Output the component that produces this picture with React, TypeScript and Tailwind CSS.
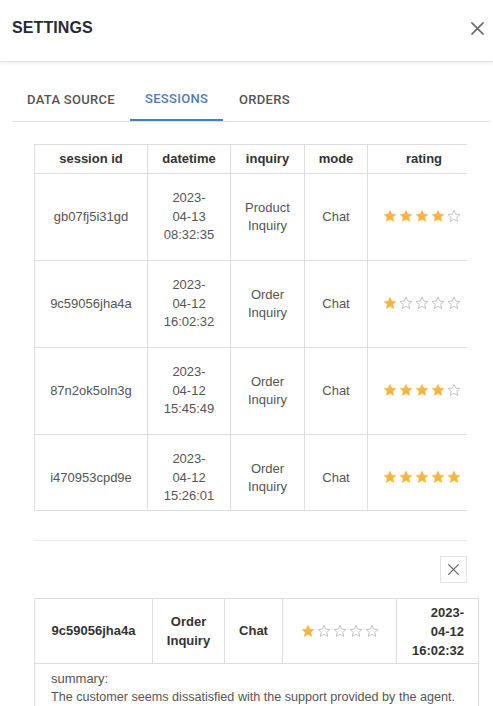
import React from "react";

const rows = [
  { id: "gb07fj5i31gd", date: ["2023-", "04-13", "08:32:35"], inq: ["Product", "Inquiry"], mode: "Chat", rating: 4 },
  { id: "9c59056jha4a", date: ["2023-", "04-12", "16:02:32"], inq: ["Order", "Inquiry"], mode: "Chat", rating: 1 },
  { id: "87n2ok5oln3g", date: ["2023-", "04-12", "15:45:49"], inq: ["Order", "Inquiry"], mode: "Chat", rating: 4 },
  { id: "i470953cpd9e", date: ["2023-", "04-12", "15:26:01"], inq: ["Order", "Inquiry"], mode: "Chat", rating: 5 },
];

function Star({ filled }: { filled: boolean }) {
  return (
    <svg width="14" height="14" viewBox="0 0 24 24" className="block">
      <path
        d="M12 2.2l2.95 6.6 7.2.7-5.4 4.8 1.58 7.06L12 17.7l-6.33 3.66 1.58-7.06-5.4-4.8 7.2-.7z"
        fill={filled ? "#f3b53f" : "none"}
        stroke={filled ? "#f3b53f" : "#b5b5b5"}
        strokeWidth={filled ? 1 : 1.4}
        strokeLinejoin="round"
      />
    </svg>
  );
}

function Stars({ n }: { n: number }) {
  return (
    <div className="flex items-center justify-center gap-[2px]">
      {[0, 1, 2, 3, 4].map((i) => (
        <Star key={i} filled={i < n} />
      ))}
    </div>
  );
}

function XIcon({ size, color }: { size: number; color: string }) {
  return (
    <svg width={size} height={size} viewBox="0 0 16 16" className="block">
      <path d="M2 2L14 14M14 2L2 14" stroke={color} strokeWidth="1.6" strokeLinecap="round" />
    </svg>
  );
}

export default function App() {
  return (
    <div
      className="w-[493px] h-[706px] overflow-hidden bg-white text-[#555]"
      style={{ fontFamily: '"Liberation Sans", Arial, sans-serif' }}
    >
      <header className="h-[62px] border-b border-[#e2e2e2] shadow-[0_2px_3px_rgba(0,0,0,0.05)] flex items-start justify-between pl-3 pr-[8px] pt-[18px]">
        <h1 className="text-[16px] font-bold text-[#262b35] leading-[20px] tracking-[0.1px]">SETTINGS</h1>
        <div className="pt-[3px]">
          <XIcon size={15} color="#666" />
        </div>
      </header>

      <nav
        className="ml-3 mr-[3px] mt-[17px] flex border-b border-[#e0e0e0]"
        style={{ fontFamily: 'Roboto, "Liberation Sans", sans-serif' }}
      >
        <div className="h-[42px] px-[15px] flex items-center text-[13px] font-medium text-[#555] tracking-[0.3px]">
          DATA SOURCE
        </div>
        <div className="h-[42px] px-[15px] flex items-center text-[13px] font-medium text-[#4a7db6] tracking-[0.3px] border-b-2 border-[#4a7db6] -mb-px">
          SESSIONS
        </div>
        <div className="h-[42px] px-[16px] flex items-center text-[13px] font-medium text-[#555] tracking-[0.3px]">
          ORDERS
        </div>
      </nav>

      <div className="ml-[34px] w-[433px] h-[367px] mt-[22px] overflow-hidden border-b border-[#dedede]">
        <table className="border-collapse text-[13px] w-[446px] table-fixed">
          <colgroup>
            <col className="w-[113px]" />
            <col className="w-[83px]" />
            <col className="w-[74px]" />
            <col className="w-[63px]" />
            <col className="w-[113px]" />
          </colgroup>
          <thead>
            <tr className="h-[29px]">
              {["session id", "datetime", "inquiry", "mode", "rating"].map((h) => (
                <th key={h} className="border border-[#dedede] font-bold text-[#333] text-center px-0 leading-[16px]">
                  {h}
                </th>
              ))}
            </tr>
          </thead>
          <tbody>
            {rows.map((r) => (
              <tr key={r.id} className="h-[87px]">
                <td className="border border-[#dedede] text-center">{r.id}</td>
                <td className="border border-[#dedede] text-center leading-[18.5px]">
                  {r.date.map((d) => (
                    <div key={d}>{d}</div>
                  ))}
                </td>
                <td className="border border-[#dedede] text-center leading-[18.5px]">
                  {r.inq.map((d) => (
                    <div key={d}>{d}</div>
                  ))}
                </td>
                <td className="border border-[#dedede] text-center">{r.mode}</td>
                <td className="border border-[#dedede] text-center">
                  <div className="-mt-[2px] -ml-[4px]">
                    <Stars n={r.rating} />
                  </div>
                </td>
              </tr>
            ))}
          </tbody>
        </table>
      </div>

      <div className="ml-[34px] w-[433px] mt-[29px] border-t border-[#ececec]" />

      <div className="ml-[34px] w-[433px] mt-[15px] flex justify-end">
        <button className="w-[27px] h-[27px] border border-[#e3e3e3] flex items-center justify-center">
          <XIcon size={13} color="#666" />
        </button>
      </div>

      <div className="ml-[34px] mt-[15px]">
        <table className="border-collapse text-[13px] w-[444px] table-fixed">
          <colgroup>
            <col className="w-[118px]" />
            <col className="w-[72px]" />
            <col className="w-[58px]" />
            <col className="w-[114px]" />
            <col className="w-[82px]" />
          </colgroup>
          <tbody>
            <tr className="h-[65px] font-bold text-[#333]">
              <td className="border border-[#dedede] text-center">9c59056jha4a</td>
              <td className="border border-[#dedede] text-center leading-[19px]">
                <div>Order</div>
                <div>Inquiry</div>
              </td>
              <td className="border border-[#dedede] text-center">Chat</td>
              <td className="border border-[#dedede] font-normal">
                <Stars n={1} />
              </td>
              <td className="border border-[#dedede] text-right pr-[14px] leading-[19px]">
                <div>2023-</div>
                <div>04-12</div>
                <div>16:02:32</div>
              </td>
            </tr>
            <tr>
              <td colSpan={5} className="border border-[#dedede] px-4 pt-[5px] pb-2 leading-[19px] text-[#555]">
                <div>summary:</div>
                <div className="whitespace-nowrap text-[12.6px]">
                  The customer seems dissatisfied with the support provided by the agent.
                </div>
              </td>
            </tr>
          </tbody>
        </table>
      </div>
    </div>
  );
}
